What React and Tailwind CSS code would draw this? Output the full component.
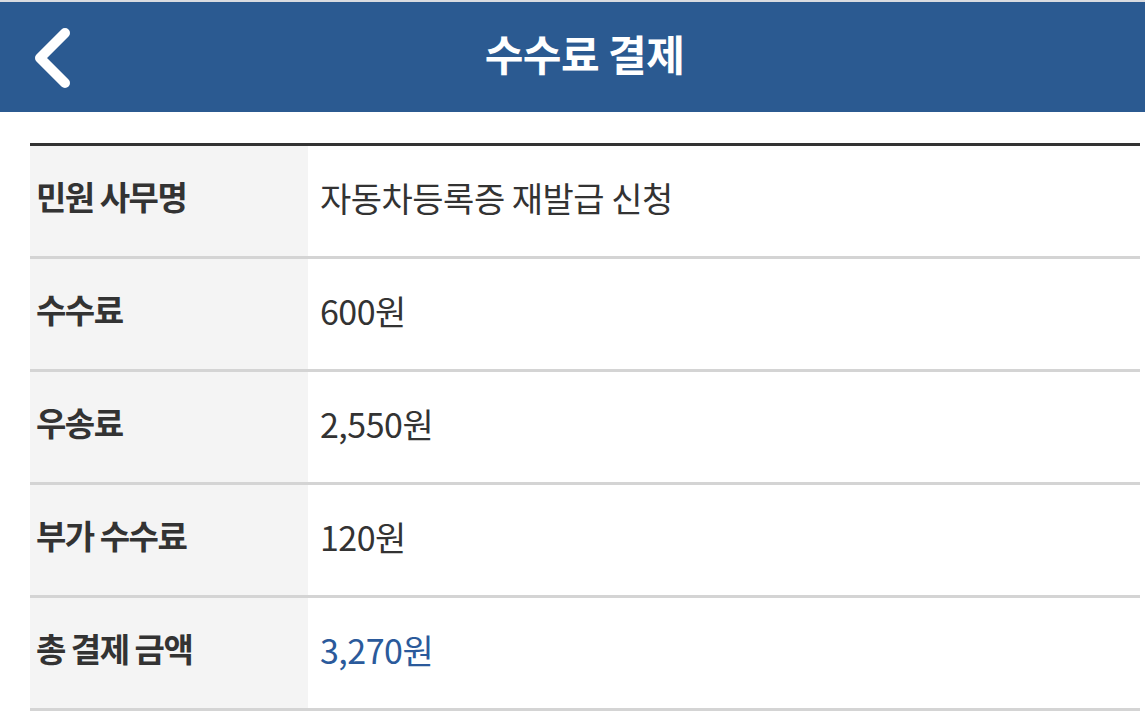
const ROWS = [
  { label: '민원 사무명', value: '자동차등록증 재발급 신청' },
  { label: '수수료', value: '600원' },
  { label: '우송료', value: '2,550원' },
  { label: '부가 수수료', value: '120원' },
  { label: '총 결제 금액', value: '3,270원', accent: true },
];

const FONT = { fontFamily: '"Noto Sans CJK KR", "Noto Sans", sans-serif' };

export default function App() {
  return (
    <div className="min-h-[711px] w-[1145px] bg-white" style={FONT}>
      <div className="h-[2px] bg-[#d9dbe0]" />
      <header className="relative flex h-[110px] items-center justify-center bg-[#2b5a91] pb-[10px] pl-[24px]">
        <button type="button" className="absolute left-[29px] top-[24px] flex h-[64px] w-[48px] items-center justify-center">
          <svg width="44" height="64" viewBox="0 0 44 64" fill="none">
            <path d="M34 7 L9 32 L34 57" stroke="#fff" strokeWidth="10" strokeLinecap="round" strokeLinejoin="round" />
          </svg>
        </button>
        <h1 className="text-[42px] font-bold tracking-[-0.5px] text-white">수수료 결제</h1>
      </header>

      <div className="pl-[30px] pr-[5px] pt-[31px]">
        <div className="border-t-[3px] border-[#333]">
          {ROWS.map((r) => (
            <div key={r.label} className="flex h-[113px] border-b-[3px] border-[#d4d4d4]">
              <div className="flex w-[278px] items-center bg-[#f4f4f4] pb-[8px] pl-[6px] text-[33px] font-bold tracking-[-1.5px] text-[#333]">
                {r.label}
              </div>
              <div
                className={`flex flex-1 items-center pb-[7px] pl-[12px] text-[34px] tracking-[-0.5px] ${r.accent ? 'text-[#2b5a9b]' : 'text-[#333]'}`}
              >
                {r.value}
              </div>
            </div>
          ))}
        </div>
      </div>
    </div>
  );
}
